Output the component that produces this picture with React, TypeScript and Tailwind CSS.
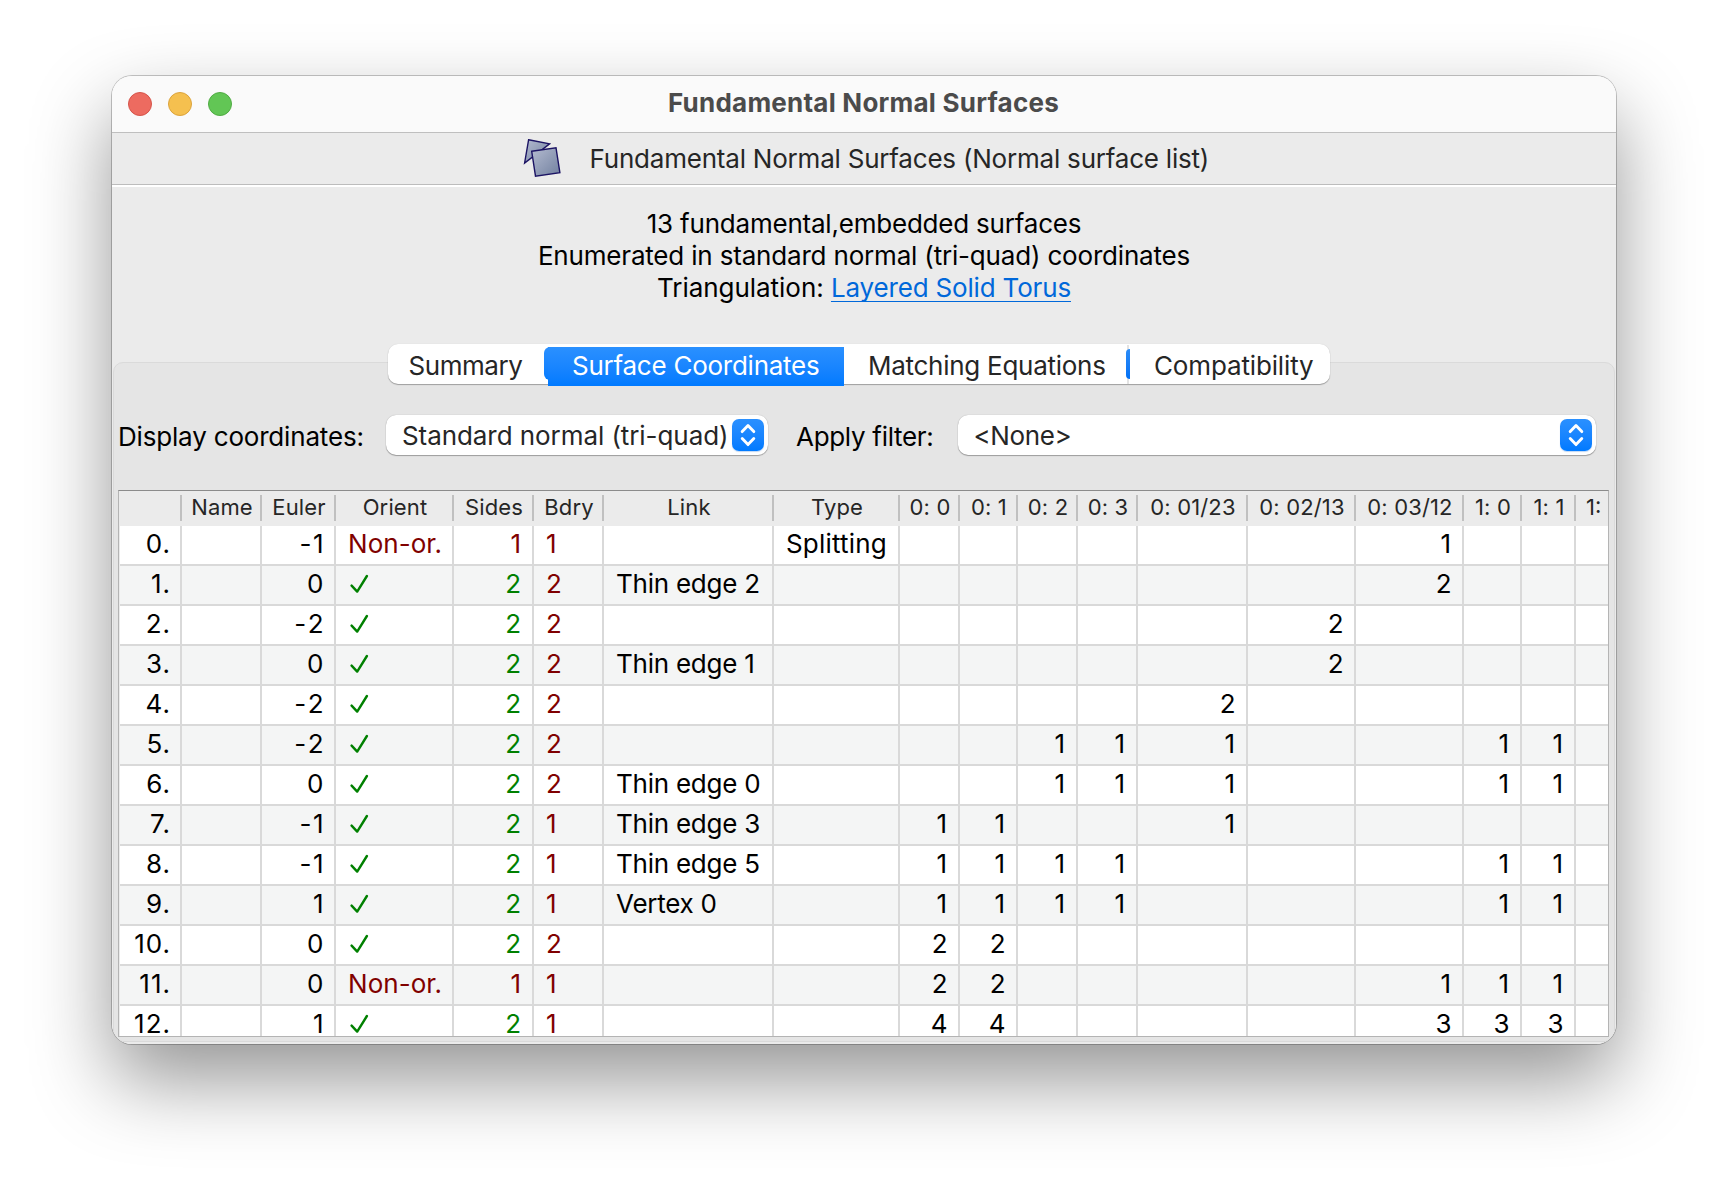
import React from "react";

type Row = {
  euler: string;
  orient: boolean;
  sides: string;
  bdry: string;
  link?: string;
  type?: string;
  coords: string[];
};

const ROWS: Row[] = [
  { euler: "-1", orient: false, sides: "1", bdry: "1", type: "Splitting", coords: ["", "", "", "", "", "", "1", "", ""] },
  { euler: "0", orient: true, sides: "2", bdry: "2", link: "Thin edge 2", coords: ["", "", "", "", "", "", "2", "", ""] },
  { euler: "-2", orient: true, sides: "2", bdry: "2", coords: ["", "", "", "", "", "2", "", "", ""] },
  { euler: "0", orient: true, sides: "2", bdry: "2", link: "Thin edge 1", coords: ["", "", "", "", "", "2", "", "", ""] },
  { euler: "-2", orient: true, sides: "2", bdry: "2", coords: ["", "", "", "", "2", "", "", "", ""] },
  { euler: "-2", orient: true, sides: "2", bdry: "2", coords: ["", "", "1", "1", "1", "", "", "1", "1"] },
  { euler: "0", orient: true, sides: "2", bdry: "2", link: "Thin edge 0", coords: ["", "", "1", "1", "1", "", "", "1", "1"] },
  { euler: "-1", orient: true, sides: "2", bdry: "1", link: "Thin edge 3", coords: ["1", "1", "", "", "1", "", "", "", ""] },
  { euler: "-1", orient: true, sides: "2", bdry: "1", link: "Thin edge 5", coords: ["1", "1", "1", "1", "", "", "", "1", "1"] },
  { euler: "1", orient: true, sides: "2", bdry: "1", link: "Vertex 0", coords: ["1", "1", "1", "1", "", "", "", "1", "1"] },
  { euler: "0", orient: true, sides: "2", bdry: "2", coords: ["2", "2", "", "", "", "", "", "", ""] },
  { euler: "0", orient: false, sides: "1", bdry: "1", coords: ["2", "2", "", "", "", "", "1", "1", "1"] },
  { euler: "1", orient: true, sides: "2", bdry: "1", coords: ["4", "4", "", "", "", "", "3", "3", "3"] },
];

const HEADERS = ["", "Name", "Euler", "Orient", "Sides", "Bdry", "Link", "Type", "0: 0", "0: 1", "0: 2", "0: 3", "0: 01/23", "0: 02/13", "0: 03/12", "1: 0", "1: 1"];

const GRID =
  "grid grid-cols-[62px_80px_74px_118px_80px_70px_170px_126px_60px_58px_60px_60px_110px_108px_108px_58px_54px_32px]";
const CELL = "h-full border-r-2 border-[#d9d9d9] pt-[5px] whitespace-nowrap";

function SurfacesIcon() {
  return (
    <svg width="44" height="44" viewBox="0 0 44 44" className="shrink-0">
      <defs>
        <linearGradient id="sheet" x1="0" y1="0" x2="1" y2="1">
          <stop offset="0" stopColor="#b4bbd0" />
          <stop offset="1" stopColor="#71809f" />
        </linearGradient>
      </defs>
      <path d="M8.6 3.8 L29.6 7.8 L4.6 27 Z" fill="url(#sheet)" stroke="#1c1464" strokeWidth="1.4" />
      <path d="M11.7 15.3 L36 11.8 L39.9 36.6 L15.5 40.2 Z" fill="url(#sheet)" stroke="#1c1464" strokeWidth="1.4" />
    </svg>
  );
}

function Check() {
  return (
    <svg width="20" height="20" viewBox="0 0 20 20" className="mt-[3px] ml-[14px]">
      <path d="M1.6 11.6 L7.2 17.6 L16.9 2" fill="none" stroke="#008000" strokeWidth="2.4" strokeLinecap="round" strokeLinejoin="round" />
    </svg>
  );
}

function Stepper() {
  return (
    <span className="h-8 w-8 shrink-0 rounded-[7px] bg-linear-to-b from-[#2a90ff] to-[#007aff] shadow-[0_1px_1px_rgba(0,90,200,0.25)]">
      <svg width="32" height="32" viewBox="0 0 32 32">
        <path d="M10.2 12.6 L16 6.6 L21.8 12.6 M10.2 19.6 L16 25.6 L21.8 19.6" fill="none" stroke="#fff" strokeWidth="2.9" strokeLinecap="round" strokeLinejoin="round" />
      </svg>
    </span>
  );
}

export default function App() {
  return (
    <div className="h-[1192px] w-[1728px] overflow-hidden bg-white pt-[76px] pl-[112px] font-['Inter',sans-serif] text-[26px] text-black">
      <div className="h-[968px] w-[1504px] rounded-[20px] shadow-[0_0_0_1px_rgba(0,0,0,0.22),0_36px_80px_rgba(0,0,0,0.42)]">
        <div className="flex h-full w-full flex-col overflow-hidden rounded-[20px] bg-[#ebebeb]">
          <div className="flex h-[57px] shrink-0 items-start border-b border-[#bfbfbf] bg-[#fafafa]">
            <div className="mt-4 ml-4 flex w-[540px] gap-4">
              <span className="h-6 w-6 rounded-full border border-[#d5544a] bg-[#ed6b60]" />
              <span className="h-6 w-6 rounded-full border border-[#dba33c] bg-[#f5c04f]" />
              <span className="h-6 w-6 rounded-full border border-[#50ab43] bg-[#62c655]" />
            </div>
            <div className="leading-[54px] font-bold tracking-[0.23px] text-[#4b4b4b]">Fundamental Normal Surfaces</div>
          </div>

          <div className="flex h-[52px] shrink-0 items-start border-b border-[#bcbcbc] pl-[408px]">
            <div className="pt-[3px]">
              <SurfacesIcon />
            </div>
            <div className="ml-[25.5px] leading-[52px] tracking-[-0.21px] text-[#262626]">Fundamental Normal Surfaces (Normal surface list)</div>
          </div>
          <div className="h-[2px] shrink-0 bg-white" />

          <div className="h-[157px] shrink-0 pt-[21px] text-center leading-8">
            <div className="tracking-[-0.21px]">13 fundamental,embedded surfaces</div>
            <div className="tracking-[-0.18px]">Enumerated in standard normal (tri-quad) coordinates</div>
            <div className="tracking-[-0.04px]">
              Triangulation:{" "}
              <a className="tracking-[-0.17px] text-[#0068da] underline decoration-1 underline-offset-[4px] [text-decoration-skip-ink:none]">Layered Solid Torus</a>
            </div>
          </div>

          <div className="relative z-10 ml-[276px] flex h-10 w-[942px] shrink-0 rounded-[10px] bg-white leading-[44px] text-[#262626] shadow-[0_1px_1px_rgba(0,0,0,0.3),0_0_1px_rgba(0,0,0,0.15)]">
            <div className="w-[160px] pl-[20.5px] tracking-[-0.44px]">Summary</div>
            <div className="relative w-[296px]">
              <span className="absolute top-[3px] -left-1 h-[33px] w-3 rounded-l-[6px] bg-linear-to-b from-[#2a90ff] to-[#047cff]" />
              <span className="absolute top-[3px] left-0 h-[39px] w-full bg-linear-to-b from-[#2a90ff] to-[#007aff]" />
              <span className="relative block pl-6 tracking-[-0.25px] text-white">Surface Coordinates</span>
            </div>
            <div className="w-[283px] pl-[24px] tracking-[-0.27px]">Matching Equations</div>
            <div className="relative mt-px h-[39px] w-[2px] bg-[#e3e3e3]">
              <span className="absolute top-1 -left-[1px] h-[30px] w-1 rounded-l-[4px] bg-linear-to-b from-[#2a8cf8] to-[#0070f5]" />
            </div>
            <div className="pl-[25px] tracking-[-0.146px]">Compatibility</div>
          </div>

          <div className="mx-px -mt-[22px] flex h-[680px] shrink-0 flex-col rounded-[10px] border border-[#dadada] bg-[#e5e5e5]">
            <div className="mt-[52px] flex h-10 items-start">
              <div className="w-[272px] pl-1 leading-[43px] tracking-[-0.18px]">Display coordinates:</div>
              <div className="flex h-10 w-[382px] items-center rounded-[10px] bg-white pr-1 pl-4 leading-[40px] text-[#262626] shadow-[0_1px_1px_rgba(0,0,0,0.3),0_0_1px_rgba(0,0,0,0.3)]">
                <span className="grow pt-px whitespace-nowrap tracking-[-0.07px]">Standard normal (tri-quad)</span>
                <Stepper />
              </div>
              <div className="w-[190px] pl-[28px] leading-[43px] tracking-[-0.302px]">Apply filter:</div>
              <div className="flex h-10 w-[638px] items-center rounded-[10px] bg-white pr-1 pl-[15.5px] leading-[40px] text-[#262626] shadow-[0_1px_1px_rgba(0,0,0,0.3),0_0_1px_rgba(0,0,0,0.3)]">
                <span className="grow pt-px tracking-[-0.4px]">{"<None>"}</span>
                <Stepper />
              </div>
            </div>

            <div className="mt-[35px] ml-1 flex h-[547px] w-[1491px] flex-col overflow-hidden border border-t-[#8b8b8b] border-r-[#b4b4b4] border-b-[#b4b4b4] border-l-[#b4b4b4] bg-[#ebebeb] pl-px">
              <div className={`${GRID} h-[35px] shrink-0 pt-1 text-[22px] leading-6 text-[#262626]`}>
                {HEADERS.map((h, i) => (
                  <div key={i} className="h-[26px] border-r-2 border-[#c0c0c0] pl-[2px] text-center tracking-[0.15px] whitespace-nowrap">
                    {h}
                  </div>
                ))}
                <div className="overflow-hidden pl-[10px]">1:</div>
              </div>
              {ROWS.map((r, i) => (
                <div key={i} className={`${GRID} h-10 shrink-0 border-b-2 border-[#d9d9d9] leading-[25px] ${i % 2 ? "bg-[#f4f5f5]" : "bg-white"}`}>
                  <div className={`${CELL} pr-[9px] text-right tracking-[1px]`}>{i}.</div>
                  <div className={CELL} />
                  <div className={`${CELL} pr-[10.5px] text-right`}>
                    {r.euler.startsWith("-") ? (
                      <>
                        <span className="tracking-[1.4px]">-</span>
                        {r.euler.slice(1)}
                      </>
                    ) : (
                      r.euler
                    )}
                  </div>
                  {r.orient ? (
                    <div className={CELL}>
                      <Check />
                    </div>
                  ) : (
                    <div className={`${CELL} pl-[12px] tracking-[0.05px] text-[#800000]`}>Non-or.</div>
                  )}
                  <div className={`${CELL} pr-[11px] text-right ${r.orient ? "text-[#008000]" : "text-[#800000]"}`}>{r.sides}</div>
                  <div className={`${CELL} pl-3 text-[#800000]`}>{r.bdry}</div>
                  <div className={`${CELL} pl-3 tracking-[-0.24px]`}>{r.link}</div>
                  <div className={`${CELL} pl-3 tracking-[0.18px]`}>{r.type}</div>
                  {r.coords.map((c, j) => (
                    <div key={j} className={`${CELL} text-right ${c === "1" ? "pr-[11px]" : "pr-[10.5px]"}`}>
                      {c}
                    </div>
                  ))}
                  <div />
                </div>
              ))}
            </div>
          </div>
        </div>
      </div>
    </div>
  );
}
